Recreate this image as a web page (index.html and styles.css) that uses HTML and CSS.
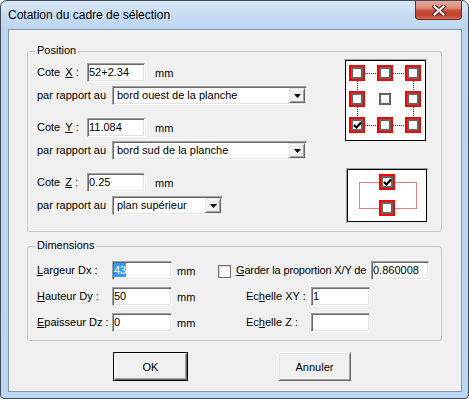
FILE: index.html
```html
<!DOCTYPE html>
<html lang="fr">
<head>
<meta charset="utf-8">
<title>Cotation du cadre de sélection</title>
<link rel="stylesheet" href="styles.css">
</head>
<body>
<div class="window">
  <div class="titlebar">
    <span class="title">Cotation du cadre de sélection</span>
    <div class="close">
      <svg width="14" height="11" viewBox="0 0 14 11">
        <path d="M2.5 1.5 L11.5 9.5 M11.5 1.5 L2.5 9.5" stroke="#4a1a12" stroke-width="4.2" stroke-linecap="square"/>
        <path d="M2.5 1.5 L11.5 9.5 M11.5 1.5 L2.5 9.5" stroke="#fff" stroke-width="2.2" stroke-linecap="square"/>
      </svg>
    </div>
  </div>
  <div class="client">
    <div class="group pos">
      <span class="legend">Position</span>
      <div class="pos-body">
        <div class="fields">
          <div class="row">
            <span class="lbl w50">Cote&nbsp;<u class="k">X</u>&nbsp;:</span>
            <div class="edit w58">52+2.34</div>
            <span class="unit">mm</span>
          </div>
          <div class="row sel">
            <span class="lbl w75">par rapport au</span>
            <div class="combo w195"><span class="ctext">bord ouest de la planche</span><span class="drop"><svg width="7" height="4" viewBox="0 0 7 4"><path d="M0 0h7l-3.5 4z" fill="#000"/></svg></span></div>
          </div>
          <div class="row next">
            <span class="lbl w50">Cote&nbsp;<u class="k">Y</u>&nbsp;:</span>
            <div class="edit w58">11.084</div>
            <span class="unit">mm</span>
          </div>
          <div class="row sel">
            <span class="lbl w75">par rapport au</span>
            <div class="combo w195"><span class="ctext">bord sud de la planche</span><span class="drop"><svg width="7" height="4" viewBox="0 0 7 4"><path d="M0 0h7l-3.5 4z" fill="#000"/></svg></span></div>
          </div>
          <div class="row next">
            <span class="lbl w50">Cote&nbsp;<u class="k">Z</u>&nbsp;:</span>
            <div class="edit w58">0.25</div>
            <span class="unit">mm</span>
          </div>
          <div class="row sel">
            <span class="lbl w75">par rapport au</span>
            <div class="combo w111"><span class="ctext">plan supérieur</span><span class="drop"><svg width="7" height="4" viewBox="0 0 7 4"><path d="M0 0h7l-3.5 4z" fill="#000"/></svg></span></div>
          </div>
        </div>
        <div class="diagrams">
          <svg class="diag1" width="83" height="83" viewBox="0 0 83 83">
            <defs>
              <g id="sq">
                <rect width="16" height="16" fill="#ff0000"/>
                <rect x="2" y="2" width="12" height="12" fill="#646464"/>
                <rect x="4" y="4" width="8" height="8" fill="#fff"/>
              </g>
            </defs>
            <path d="M0 0.5H83" stroke="#a0a0a0"/>
            <rect x="1.5" y="1.5" width="80" height="80" fill="#fff" stroke="#000"/>
            <g stroke="#c00000" stroke-dasharray="1 1">
              <path d="M21 14.5H33M49 14.5H61M21 66.5H33M49 66.5H61"/>
              <path d="M13.5 22V32M13.5 48V58M69.5 22V32M69.5 48V58"/>
            </g>
            <use href="#sq" x="5" y="6"/>
            <use href="#sq" x="33" y="6"/>
            <use href="#sq" x="61" y="6"/>
            <use href="#sq" x="5" y="32"/>
            <use href="#sq" x="61" y="32"/>
            <use href="#sq" x="5" y="58"/>
            <use href="#sq" x="33" y="58"/>
            <use href="#sq" x="61" y="58"/>
            <rect x="35" y="34" width="12" height="12" fill="#646464"/>
            <rect x="37" y="36" width="8" height="8" fill="#fff"/>
            <path d="M10 66 L12.5 68.5 L17 63.5" fill="none" stroke="#000" stroke-width="2.2"/>
          </svg>
          <svg class="diag2" width="82" height="55" viewBox="0 0 82 55">
            <path d="M0 0.5H82M0.5 0V55" stroke="#a0a0a0"/>
            <rect x="1.5" y="1.5" width="79" height="52" fill="#fff" stroke="#000"/>
            <g stroke="#c00000" stroke-dasharray="1 1" fill="none">
              <path d="M13.5 14.5H70.5V40.5H13.5Z"/>
            </g>
            <use href="#sq" x="33" y="6"/>
            <use href="#sq" x="33" y="32"/>
            <path d="M38 14 L40.5 16.5 L45 11.5" fill="none" stroke="#000" stroke-width="2.2"/>
          </svg>
        </div>
      </div>
    </div>

    <div class="group dims">
      <span class="legend">Dimensions</span>
      <div class="drow">
        <span class="lbl w75"><u>L</u>argeur Dx :</span>
        <div class="edit w60"><span class="hl">43</span></div>
        <span class="unit2">mm</span>
        <span class="check"></span>
        <span class="lbl keep"><u>G</u>arder la proportion X/Y de</span>
        <div class="edit w58">0.860008</div>
      </div>
      <div class="drow">
        <span class="lbl w75"><u>H</u>auteur Dy :</span>
        <div class="edit w60">50</div>
        <span class="unit2">mm</span>
        <span class="lbl ech">Ec<u>h</u>elle XY :</span>
        <div class="edit w59">1</div>
      </div>
      <div class="drow">
        <span class="lbl w75"><u>E</u>paisseur Dz :</span>
        <div class="edit w60">0</div>
        <span class="unit2">mm</span>
        <span class="lbl ech">Ec<u>h</u>elle Z :</span>
        <div class="edit w59"></div>
      </div>
    </div>

    <div class="buttons">
      <div class="btn default">OK</div>
      <div class="btn cancel">Annuler</div>
    </div>
  </div>
</div>
</body>
</html>
```

FILE: styles.css
```css
* { box-sizing: border-box; }
html, body { margin: 0; padding: 0; }
body {
  font-family: "Liberation Sans", Arial, sans-serif;
  font-size: 11px;
  color: #000;
  background: #fff;
}

.window {
  width: 469px;
  height: 399px;
  border: 1px solid #3d4b5a;
  border-radius: 7px 7px 4px 4px;
  background: linear-gradient(to bottom, #dae8f7 0px, #c9ddf3 12px, #bcd5f0 28px, #bdd6f1 100%);
  padding: 0 6px 6px 7px;
  display: flex;
  flex-direction: column;
}

.titlebar {
  height: 28px;
  display: flex;
  justify-content: space-between;
  align-items: flex-start;
}
.title {
  font-size: 12px;
  line-height: 14px;
  margin-top: 7px;
  color: #000;
}
.close {
  width: 47px;
  height: 19px;
  border: 1px solid #6e2c22;
  border-top: none;
  border-radius: 0 0 4px 4px;
  background: linear-gradient(to bottom, #e9aa9c 0%, #dd8a79 40%, #c8523e 50%, #c0432e 78%, #d26a55 100%);
  display: flex;
  align-items: center;
  justify-content: center;
}
.close svg { display: block; margin-top: 1px; }

.client {
  flex: 1;
  border: 1px solid #8196ad;
  background: #f0f0f0;
  display: flex;
  flex-direction: column;
}

.group {
  position: relative;
  border: 1px solid #c3c9ce;
  border-radius: 3px;
  margin: 0 19px 0 18px;
}
.legend {
  position: absolute;
  top: -8px;
  left: 7px;
  padding: 0 2px;
  line-height: 13px;
  background: #f0f0f0;
}

.pos {
  margin-top: 21px;
  height: 181px;
  padding: 7px 0 0 9px;
}
.pos-body { display: flex; }
.fields { width: 270px; margin-top: 4px; }

.row {
  display: flex;
  align-items: center;
  height: 19px;
}
.row.sel { margin-top: 4px; }
.row.next { margin-top: 13px; }

.lbl { white-space: nowrap; line-height: 13px; }
.w50 { width: 50px; }
.w75 { width: 75px; }
.k { margin-left: 2px; }

.edit {
  height: 19px;
  background: #fff;
  border: 1px solid;
  border-color: #a0a0a0 #fff #fff #a0a0a0;
  box-shadow: inset 1px 1px 0 #696969, inset -1px -1px 0 #e3e3e3;
  padding: 0 0 0 1px;
  line-height: 17px;
  white-space: nowrap;
  overflow: hidden;
}
.w58 { width: 58px; }
.w59 { width: 59px; }
.w60 { width: 60px; }
.unit { margin-left: 10px; }

.combo {
  height: 19px;
  background: #fff;
  border: 1px solid;
  border-color: #a0a0a0 #fff #fff #a0a0a0;
  box-shadow: inset 1px 1px 0 #696969, inset -1px -1px 0 #e3e3e3;
  display: flex;
  align-items: center;
}
.w195 { width: 195px; }
.w111 { width: 111px; }
.ctext { flex: 1; padding-left: 4px; white-space: nowrap; line-height: 17px; }
.drop {
  width: 16px;
  height: 15px;
  margin-right: 1px;
  background: #f0f0f0;
  border: 1px solid;
  border-color: #e3e3e3 #696969 #696969 #e3e3e3;
  box-shadow: inset 1px 1px 0 #fff, inset -1px -1px 0 #a0a0a0;
  display: flex;
  align-items: center;
  justify-content: center;
}
.drop svg { display: block; }

.diagrams {
  margin-left: 37px;
  display: flex;
  flex-direction: column;
  align-items: flex-start;
}
.diagrams svg { display: block; }
.diag2 { margin-left: 2px; margin-top: 26px; }

.dims {
  margin-top: 14px;
  height: 95px;
  padding: 14px 0 0 9px;
  display: flex;
  flex-direction: column;
  gap: 7px;
}
.drow {
  display: flex;
  align-items: center;
  height: 19px;
}
.unit2 { margin-left: 5px; width: 41px; }
.check {
  width: 13px;
  height: 13px;
  margin-top: 1px;
  background: #fff;
  border: 1px solid #707070;
  box-shadow: inset 1px 1px 0 #d8d8d8;
}
.keep { margin-left: 5px; width: 135px; letter-spacing: -0.15px; }
.ech { margin-left: 28px; width: 65px; }
.hl {
  display: inline-block;
  background: #3399ff;
  color: #fff;
  line-height: 14px;
  height: 14px;
  vertical-align: middle;
  margin-top: -2px;
}

.buttons {
  display: flex;
  margin-top: 11px;
  padding-left: 104px;
}
.btn {
  height: 29px;
  background: #f0f0f0;
  display: flex;
  align-items: center;
  justify-content: center;
  border: 1px solid;
}
.default {
  width: 75px;
  border-color: #000;
  box-shadow: inset 1px 1px 0 #fff, inset -1px -1px 0 #696969, inset -2px -2px 0 #a0a0a0;
}
.cancel {
  width: 73px;
  margin-left: 90px;
  border-color: #fff #696969 #696969 #fff;
  box-shadow: inset 1px 1px 0 #e3e3e3, inset -1px -1px 0 #a0a0a0;
}
```
